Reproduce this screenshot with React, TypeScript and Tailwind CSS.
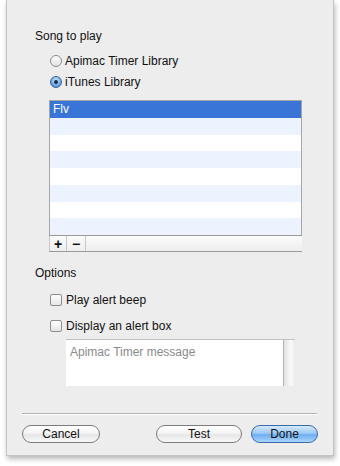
import React from "react";

const font = "font-['Liberation_Sans','Arial',sans-serif]";

function Radio({ checked, label }: { checked?: boolean; label: string }) {
  return (
    <div className="flex items-center h-[16px] gap-[3px]">
      {checked ? (
        <div className="w-[12px] h-[12px] rounded-full border border-[#3a5f9a] bg-[radial-gradient(circle_at_50%_35%,#d6ecff_0%,#6aa6e8_60%,#3f7fd0_100%)] flex items-center justify-center">
          <div className="w-[4px] h-[4px] rounded-full bg-[#1d2c40]" />
        </div>
      ) : (
        <div className="w-[12px] h-[12px] rounded-full border border-[#8c8c8c] bg-[linear-gradient(#fdfdfd,#e2e2e2)]" />
      )}
      <span>{label}</span>
    </div>
  );
}

function Check({ label }: { label: string }) {
  return (
    <div className="flex items-center h-[16px] gap-[4px]">
      <div className="w-[12px] h-[12px] rounded-[2px] border border-[#8e8e8e] bg-[linear-gradient(#ffffff,#e4e4e4)]" />
      <span>{label}</span>
    </div>
  );
}

function AquaButton({ label, width, primary }: { label: string; width: string; primary?: boolean }) {
  return (
    <div
      className={`${width} h-[18px] rounded-full flex items-center justify-center text-[12px] leading-none ${
        primary
          ? "border border-[#3c6aa8] bg-[linear-gradient(#d4e9fd_0%,#9ccaf6_45%,#6eaef2_55%,#a9d6fb_100%)]"
          : "border border-[#7c7c7c] bg-[linear-gradient(#ffffff_0%,#f4f4f4_45%,#e6e6e6_55%,#f8f8f8_100%)]"
      }`}
    >
      {label}
    </div>
  );
}

export default function App() {
  const rows = [0, 1, 2, 3, 4, 5, 6, 7];
  return (
    <div className={`w-[340px] h-[466px] bg-white text-[12px] text-[#111] ${font}`}>
      <div className="ml-[6px] w-[328px] h-[456px] bg-[#ededed] border-x border-b border-[#c4c4c4] shadow-[1px_3px_5px_rgba(0,0,0,0.28)] flex flex-col pl-[28px] pr-[16px]">
        <div className="mt-[28px] h-[16px] leading-[16px]">Song to play</div>

        <div className="ml-[15px] mt-[9px]">
          <Radio label="Apimac Timer Library" />
        </div>
        <div className="ml-[15px] mt-[5px]">
          <Radio checked label="iTunes Library" />
        </div>

        {/* song list */}
        <div className="ml-[14px] mt-[10px] w-[253px]">
          <div className="border-x border-t border-[#a6a6a6] bg-white">
            {rows.map((i) => (
              <div
                key={i}
                className={`h-[16.75px] flex items-center px-[3px] ${
                  i === 0 ? "bg-[#3875d7] text-white" : i % 2 === 1 ? "bg-[#edf3fe]" : "bg-white"
                }`}
              >
                {i === 0 ? "Flv" : ""}
              </div>
            ))}
          </div>
          <div className="h-[17px] flex border-t border-b border-[#9a9a9a] bg-[linear-gradient(#fbfbfb,#eeeeee)]">
            <div className="w-[18px] border-l border-r border-[#c8c8c8] flex items-center justify-center text-[14px] font-bold leading-none">
              +
            </div>
            <div className="w-[19px] border-r border-[#c8c8c8] flex items-center justify-center text-[14px] font-bold leading-none">
              −
            </div>
            <div className="flex-1" />
          </div>
        </div>

        <div className="mt-[13px] h-[16px] leading-[16px]">Options</div>
        <div className="ml-[15px] mt-[11px]">
          <Check label="Play alert beep" />
        </div>
        <div className="ml-[15px] mt-[10px]">
          <Check label="Display an alert box" />
        </div>

        {/* message field */}
        <div className="ml-[31px] mt-[5px] w-[229px] h-[47px] flex border-t border-[#c0c0c0]">
          <div className="flex-1 bg-white px-[4px] pt-[3px] text-[#8a8a8a]">Apimac Timer message</div>
          <div className="w-[12px] border-l border-[#b4b4b4] bg-[linear-gradient(to_right,#e0e0e0,#fafafa_60%,#ececec)]" />
        </div>

        <div className="-ml-[13px] mt-[27px] w-[295px] h-[2px] border-t border-[#b2b2b2] bg-white" />

        <div className="-ml-[13px] mt-[10px] w-[296px] flex">
          <AquaButton label="Cancel" width="w-[78px]" />
          <div className="flex-1" />
          <AquaButton label="Test" width="w-[86px]" />
          <div className="w-[9px]" />
          <AquaButton label="Done" width="w-[67px]" primary />
        </div>
      </div>
    </div>
  );
}
